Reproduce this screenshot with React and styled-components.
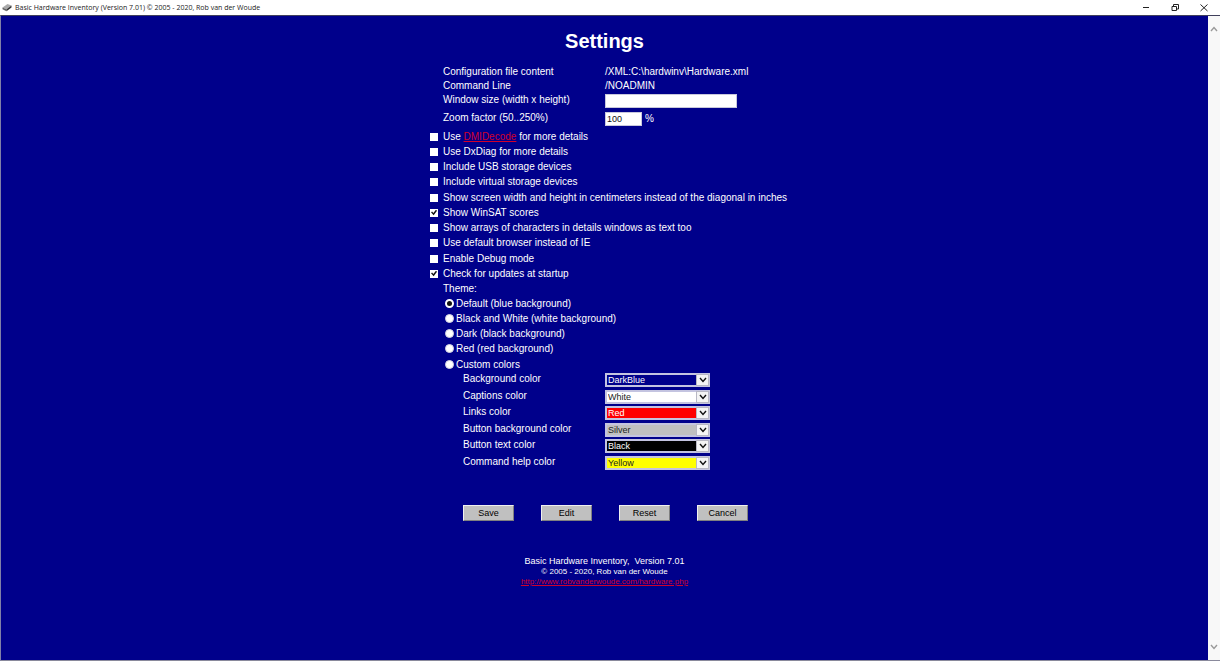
import React, { useState } from 'react';
import styled, { createGlobalStyle } from 'styled-components';

const GlobalStyle = createGlobalStyle`
  * {
    box-sizing: border-box;
  }
  body {
    margin: 0;
    background: #00008b;
    font-family: "Liberation Sans", Arial, sans-serif;
  }
`;

const Window = styled.div`
  display: flex;
  flex-direction: column;
  min-height: 100vh;
  background: #fff;
`;

const TitleBar = styled.header`
  display: flex;
  align-items: center;
  justify-content: space-between;
  height: 15px;
  padding: 0 11px 0 2px;
  background: #fff;
`;

const Caption = styled.div`
  display: flex;
  align-items: center;
  gap: 3px;
  color: #222;
  font-family: "Open Sans", "Noto Sans", sans-serif;
  font-size: 7px;
  line-height: 14px;
  white-space: nowrap;
`;

const WindowControls = styled.div`
  display: flex;
  gap: 19px;
`;

const WindowButton = styled.button`
  display: flex;
  align-items: center;
  justify-content: center;
  width: 10px;
  height: 14px;
  padding: 0;
  border: none;
  background: none;
`;

const Body = styled.div`
  display: flex;
  flex: 1;
  border-top: 1px solid #40405c;
  border-bottom: 1px solid #8a8a9c;
  border-left: 1px solid #8080a8;
`;

const Main = styled.main`
  flex: 1;
  display: flex;
  flex-direction: column;
  align-items: center;
  padding: 12px 0;
  background: #00008b;
  color: #fff;
`;

const ScrollTrack = styled.div`
  display: flex;
  flex-direction: column;
  justify-content: space-between;
  align-items: center;
  width: 12px;
  padding: 10px 0;
  background: #f8f8f8;
`;

const Title = styled.h1`
  margin: 0;
  font-size: 20px;
  line-height: 26px;
`;

const Form = styled.form`
  width: 349px;
  margin-top: 11px;
  font-size: 10px;
  white-space: nowrap;
`;

const Field = styled.div`
  display: grid;
  grid-template-columns: 162px 1fr;
  align-items: start;
  min-height: ${({ $height }) => $height || 14}px;
  padding-left: 13px;
  line-height: 14px;
`;

const Value = styled.div`
  display: flex;
  align-items: flex-end;
  gap: 3px;
`;

const TextInput = styled.input`
  width: ${({ $width }) => $width}px;
  height: 14px;
  margin-top: 1px;
  padding: 0 1px;
  border: 1px solid #c8c8dc;
  border-radius: 0;
  background: #fff;
  color: #111;
  font-family: inherit;
  font-size: 9px;
`;

const OptionList = styled.div`
  display: grid;
  grid-auto-rows: 15px 15px 15px 16px;
`;

const Option = styled.label`
  display: flex;
  align-items: center;
  gap: 5px;
  height: 15px;
  line-height: 15px;
`;

const Checkbox = styled.input`
  appearance: none;
  flex-shrink: 0;
  width: 8px;
  height: 8px;
  margin: 0;
  background: #fff;

  &:checked::after {
    content: '';
    display: block;
    width: 6px;
    height: 6px;
    margin: 1px;
    background: #111;
    clip-path: polygon(0 45%, 18% 32%, 40% 58%, 82% 5%, 100% 20%, 44% 95%);
  }
`;

const Radio = styled.input`
  appearance: none;
  flex-shrink: 0;
  width: 9px;
  height: 9px;
  margin: 0;
  border: 1px solid #d4d4e4;
  border-radius: 50%;
  background: #fff;

  &:checked {
    border: 2px solid #fff;
    background: #111;
  }
`;

const ThemeGroup = styled.fieldset`
  margin: 0;
  padding: 0 0 0 13px;
  border: none;
`;

const Legend = styled.legend`
  padding: 0;
  line-height: 15px;
`;

const ThemeOption = styled(Option)`
  gap: 2px;
  padding-left: 2px;
`;

const ColorList = styled.div`
  display: grid;
  grid-auto-rows: 17px 16px;
`;

const ColorField = styled(Field)`
  grid-template-columns: 142px 1fr;
  padding-left: 33px;
`;

const SelectBox = styled.div`
  position: relative;
  width: 105px;
  height: 14px;
  margin-top: 1px;
`;

const Select = styled.select`
  appearance: none;
  display: block;
  width: 100%;
  height: 14px;
  padding: 0 14px 0 1px;
  border: 2px solid #c4c4e0;
  border-radius: 0;
  background: ${({ $background }) => $background};
  color: ${({ $color }) => $color};
  font-family: inherit;
  font-size: 9px;
  line-height: 10px;
`;

const Arrow = styled.span`
  position: absolute;
  top: 1px;
  right: 1px;
  display: flex;
  align-items: center;
  justify-content: center;
  width: 13px;
  height: 12px;
  border: 1px solid #b8b8c4;
  background: #f4f4f4;
  pointer-events: none;
`;

const Actions = styled.div`
  display: flex;
  gap: 27px;
  margin-top: 34px;
  padding-left: 33px;
`;

const ActionButton = styled.button`
  width: 51px;
  height: 16px;
  padding: 0;
  border: 1px solid;
  border-color: #f0f0f0 #808080 #808080 #f0f0f0;
  background: silver;
  color: #000;
  font-family: inherit;
  font-size: 9px;
`;

const Link = styled.a`
  color: #d0002c;
`;

const Footer = styled.footer`
  display: flex;
  flex-direction: column;
  align-items: center;
  margin-top: 35px;
  font-size: 8px;
  line-height: 10px;
`;

const Product = styled.div`
  font-size: 9px;
  line-height: 11px;
  white-space: pre;
`;

const checkboxes = [
  { id: 'dmidecode' },
  { id: 'dxdiag', label: 'Use DxDiag for more details' },
  { id: 'usb', label: 'Include USB storage devices' },
  { id: 'virtual', label: 'Include virtual storage devices' },
  { id: 'cm', label: 'Show screen width and height in centimeters instead of the diagonal in inches' },
  { id: 'winsat', label: 'Show WinSAT scores' },
  { id: 'chars', label: 'Show arrays of characters in details windows as text too' },
  { id: 'browser', label: 'Use default browser instead of IE' },
  { id: 'debug', label: 'Enable Debug mode' },
  { id: 'updates', label: 'Check for updates at startup' },
];

const themes = [
  { id: 'blue', label: 'Default (blue background)' },
  { id: 'bw', label: 'Black and White (white background)' },
  { id: 'dark', label: 'Dark (black background)' },
  { id: 'red', label: 'Red (red background)' },
  { id: 'custom', label: 'Custom colors' },
];

const colorFields = [
  { id: 'background', label: 'Background color', value: 'DarkBlue' },
  { id: 'captions', label: 'Captions color', value: 'White' },
  { id: 'links', label: 'Links color', value: 'Red' },
  { id: 'buttonBackground', label: 'Button background color', value: 'Silver' },
  { id: 'buttonText', label: 'Button text color', value: 'Black' },
  { id: 'help', label: 'Command help color', value: 'Yellow' },
];

const textColors = {
  DarkBlue: '#fff',
  White: '#222',
  Red: '#fff',
  Silver: '#222',
  Black: '#fff',
  Yellow: '#222',
};

const Chevron = ({ up, color = '#999' }) => (
  <svg width="8" height="6" viewBox="0 0 8 6" fill="none" stroke={color} strokeWidth="1.4">
    <path d={up ? 'M1 5 L4 1.5 L7 5' : 'M1 1 L4 4.5 L7 1'} />
  </svg>
);

const App = () => {
  const [checked, setChecked] = useState({ winsat: true, updates: true });
  const [theme, setTheme] = useState('blue');
  const [colors, setColors] = useState(
    Object.fromEntries(colorFields.map((field) => [field.id, field.value]))
  );

  const toggle = (id) => {
    setChecked({ ...checked, [id]: !checked[id] });
  };

  return (
    <Window>
      <GlobalStyle />
      <TitleBar>
        <Caption>
          <svg width="10" height="9" viewBox="0 0 10 9">
            <path d="M0.5 4.5 L5.5 1 L9.5 2.5 L4.5 6.2 Z" fill="#aaa" />
            <path d="M0.5 4.5 L4.5 6.2 V8.2 L0.5 6.3 Z" fill="#666" />
            <path d="M4.5 6.2 L9.5 2.5 V4.5 L4.5 8.2 Z" fill="#333" />
          </svg>
          Basic Hardware Inventory (Version 7.01) © 2005 - 2020, Rob van der Woude
        </Caption>
        <WindowControls>
          <WindowButton aria-label="Minimize">
            <svg width="8" height="8" viewBox="0 0 8 8" stroke="#222">
              <path d="M1 3.5 H7" />
            </svg>
          </WindowButton>
          <WindowButton aria-label="Restore">
            <svg width="8" height="8" viewBox="0 0 8 8" fill="none" stroke="#222">
              <path d="M1 2.5 H5.5 V6.5 H1 Z M2.5 2.5 V0.5 H7.5 V5 H5.5" />
            </svg>
          </WindowButton>
          <WindowButton aria-label="Close">
            <svg width="8" height="8" viewBox="0 0 8 8" stroke="#222">
              <path d="M0.5 0.5 L7.5 7 M7.5 0.5 L0.5 7" />
            </svg>
          </WindowButton>
        </WindowControls>
      </TitleBar>
      <Body>
        <Main>
          <Title>Settings</Title>
          <Form onSubmit={(event) => event.preventDefault()}>
            <Field>
              <span>Configuration file content</span>
              <span>/XML:C:\hardwinv\Hardware.xml</span>
            </Field>
            <Field>
              <span>Command Line</span>
              <span>/NOADMIN</span>
            </Field>
            <Field $height={18}>
              <label htmlFor="windowSize">Window size (width x height)</label>
              <Value>
                <TextInput id="windowSize" type="text" $width={132} />
              </Value>
            </Field>
            <Field $height={18}>
              <label htmlFor="zoom">Zoom factor (50..250%)</label>
              <Value>
                <TextInput id="zoom" type="text" defaultValue="100" $width={37} />
                %
              </Value>
            </Field>
            <OptionList>
              {checkboxes.map(({ id, label }) => (
                <Option key={id}>
                  <Checkbox type="checkbox" checked={!!checked[id]} onChange={() => toggle(id)} />
                  <span>
                    {label || (
                      <>
                        Use <Link href="#dmidecode">DMIDecode</Link> for more details
                      </>
                    )}
                  </span>
                </Option>
              ))}
            </OptionList>
            <ThemeGroup>
              <Legend>Theme:</Legend>
              <OptionList>
                {themes.map(({ id, label }) => (
                  <ThemeOption key={id}>
                    <Radio type="radio" name="theme" checked={theme === id} onChange={() => setTheme(id)} />
                    {label}
                  </ThemeOption>
                ))}
              </OptionList>
            </ThemeGroup>
            <ColorList>
              {colorFields.map(({ id, label }) => (
                <ColorField key={id}>
                  <label htmlFor={id}>{label}</label>
                  <SelectBox>
                    <Select
                      id={id}
                      value={colors[id]}
                      $background={colors[id].toLowerCase()}
                      $color={textColors[colors[id]]}
                      onChange={(event) => setColors({ ...colors, [id]: event.target.value })}
                    >
                      {Object.keys(textColors).map((name) => (
                        <option key={name}>{name}</option>
                      ))}
                    </Select>
                    <Arrow>
                      <Chevron color="#111" />
                    </Arrow>
                  </SelectBox>
                </ColorField>
              ))}
            </ColorList>
            <Actions>
              <ActionButton type="submit">Save</ActionButton>
              <ActionButton type="button">Edit</ActionButton>
              <ActionButton type="reset">Reset</ActionButton>
              <ActionButton type="button">Cancel</ActionButton>
            </Actions>
          </Form>
          <Footer>
            <Product>Basic Hardware Inventory,  Version 7.01</Product>
            <div>© 2005 - 2020, Rob van der Woude</div>
            <Link href="http://www.robvanderwoude.com/hardware.php">
              http://www.robvanderwoude.com/hardware.php
            </Link>
          </Footer>
        </Main>
        <ScrollTrack>
          <Chevron up />
          <Chevron />
        </ScrollTrack>
      </Body>
    </Window>
  );
};

export default App;
